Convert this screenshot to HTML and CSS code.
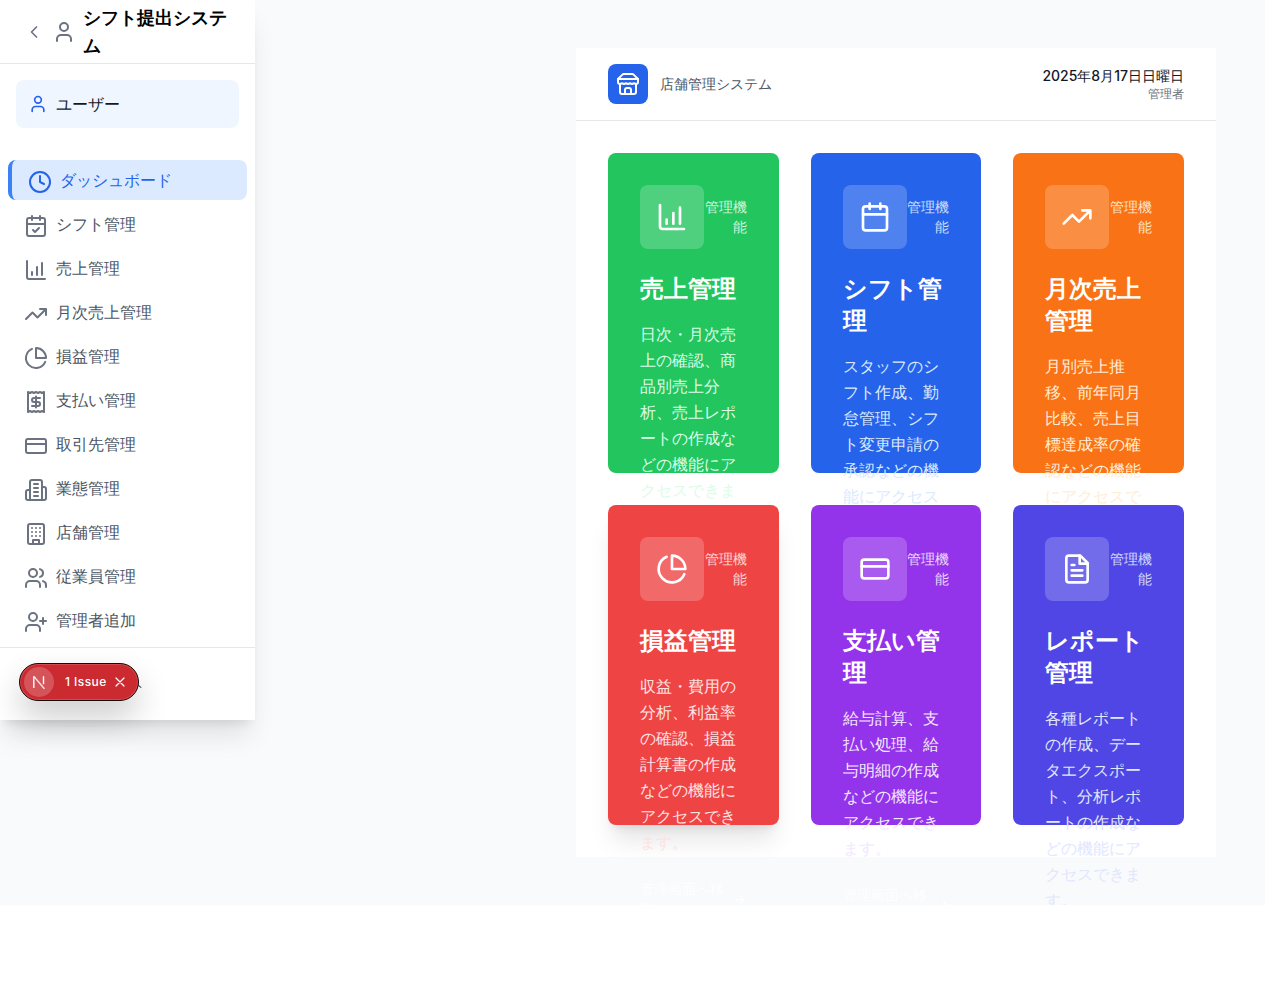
FILE: index.html
```html
<!DOCTYPE html>
<html lang="ja">
<head>
<meta charset="utf-8">
<title>シフト提出システム</title>
<link rel="stylesheet" href="styles.css">
</head>
<body>
<svg class="sprite" aria-hidden="true">
  <symbol id="i-chevron" viewBox="0 0 24 24"><path d="m15 18-6-6 6-6"/></symbol>
  <symbol id="i-user" viewBox="0 0 24 24"><path d="M19 21v-2a4 4 0 0 0-4-4H9a4 4 0 0 0-4 4v2"/><circle cx="12" cy="7" r="4"/></symbol>
  <symbol id="i-clock" viewBox="0 0 24 24"><circle cx="12" cy="12" r="10"/><path d="M12 6v6l4 2"/></symbol>
  <symbol id="i-calcheck" viewBox="0 0 24 24"><rect x="3" y="4" width="18" height="18" rx="2"/><path d="M16 2v4M8 2v4M3 10h18M9 16l2 2 4-4"/></symbol>
  <symbol id="i-calendar" viewBox="0 0 24 24"><rect x="3" y="4" width="18" height="18" rx="2"/><path d="M16 2v4M8 2v4M3 10h18"/></symbol>
  <symbol id="i-chart" viewBox="0 0 24 24"><path d="M3 3v16a2 2 0 0 0 2 2h16M18 17V5M13 17V9M8 17v-3"/></symbol>
  <symbol id="i-trend" viewBox="0 0 24 24"><path d="M22 7l-8.500 8.500-5-5L2 17M16 7h6v6"/></symbol>
  <symbol id="i-pie" viewBox="0 0 24 24"><path d="M21.210 15.890A10 10 0 1 1 8 2.830"/><path d="M22 12A10 10 0 0 0 12 2v10z"/></symbol>
  <symbol id="i-receipt" viewBox="0 0 24 24"><path d="M4 2v20l2-1 2 1 2-1 2 1 2-1 2 1 2-1 2 1V2l-2 1-2-1-2 1-2-1-2 1-2-1-2 1Z"/><path d="M16 8h-6a2 2 0 1 0 0 4h4a2 2 0 1 1 0 4H8M12 17.500v-11"/></symbol>
  <symbol id="i-card" viewBox="0 0 24 24"><rect x="2" y="5" width="20" height="14" rx="2"/><path d="M2 10h20"/></symbol>
  <symbol id="i-building2" viewBox="0 0 24 24"><path d="M6 22V4a2 2 0 0 1 2-2h8a2 2 0 0 1 2 2v18Z"/><path d="M6 12H4a2 2 0 0 0-2 2v6a2 2 0 0 0 2 2h2M18 9h2a2 2 0 0 1 2 2v9a2 2 0 0 1-2 2h-2M10 6h4M10 10h4M10 14h4M10 18h4"/></symbol>
  <symbol id="i-building" viewBox="0 0 24 24"><rect x="4" y="2" width="16" height="20" rx="2"/><path d="M9 22v-4h6v4M8 6h.01M16 6h.01M12 6h.01M12 10h.01M12 14h.01M16 10h.01M16 14h.01M8 10h.01M8 14h.01"/></symbol>
  <symbol id="i-users" viewBox="0 0 24 24"><path d="M16 21v-2a4 4 0 0 0-4-4H6a4 4 0 0 0-4 4v2"/><circle cx="9" cy="7" r="4"/><path d="M22 21v-2a4 4 0 0 0-3-3.870M16 3.130a4 4 0 0 1 0 7.750"/></symbol>
  <symbol id="i-userplus" viewBox="0 0 24 24"><path d="M16 21v-2a4 4 0 0 0-4-4H6a4 4 0 0 0-4 4v2"/><circle cx="9" cy="7" r="4"/><path d="M19 8v6M22 11h-6"/></symbol>
  <symbol id="i-file" viewBox="0 0 24 24"><path d="M14.500 2H6a2 2 0 0 0-2 2v16a2 2 0 0 0 2 2h12a2 2 0 0 0 2-2V7.500L14.500 2z"/><path d="M14 2v6h6M16 13H8M16 17H8M10 9H8"/></symbol>
  <symbol id="i-store" viewBox="0 0 24 24"><path d="m2 7 4.410-4.410A2 2 0 0 1 7.830 2h8.340a2 2 0 0 1 1.420.590L22 7"/><path d="M4 12v8a2 2 0 0 0 2 2h12a2 2 0 0 0 2-2v-8"/><path d="M15 22v-4a2 2 0 0 0-2-2h-2a2 2 0 0 0-2 2v4"/><path d="M2 7h20"/><path d="M22 7v3a2 2 0 0 1-2 2 2.700 2.700 0 0 1-1.590-.630.700.700 0 0 0-.820 0A2.700 2.700 0 0 1 16 12a2.700 2.700 0 0 1-1.590-.630.700.700 0 0 0-.820 0A2.700 2.700 0 0 1 12 12a2.700 2.700 0 0 1-1.590-.630.700.700 0 0 0-.820 0A2.700 2.700 0 0 1 8 12a2.700 2.700 0 0 1-1.590-.630.700.700 0 0 0-.820 0A2.700 2.700 0 0 1 4 12a2 2 0 0 1-2-2V7"/></symbol>
</svg>

<div class="page">
  <aside class="sidebar">
    <div class="side-head">
      <button class="back-btn" type="button"><svg class="icon icon-20 gray"><use href="#i-chevron"/></svg></button>
      <svg class="icon icon-24 gray"><use href="#i-user"/></svg>
      <h1 class="side-title">シフト提出システム</h1>
    </div>
    <div class="user-wrap">
      <div class="user-card">
        <svg class="icon icon-20 blue"><use href="#i-user"/></svg>
        <span class="user-name">ユーザー</span>
      </div>
    </div>
    <nav class="nav">
      <a class="nav-item active"><svg class="icon icon-24"><use href="#i-clock"/></svg><span>ダッシュボード</span></a>
      <a class="nav-item"><svg class="icon icon-24"><use href="#i-calcheck"/></svg><span>シフト管理</span></a>
      <a class="nav-item"><svg class="icon icon-24"><use href="#i-chart"/></svg><span>売上管理</span></a>
      <a class="nav-item"><svg class="icon icon-24"><use href="#i-trend"/></svg><span>月次売上管理</span></a>
      <a class="nav-item"><svg class="icon icon-24"><use href="#i-pie"/></svg><span>損益管理</span></a>
      <a class="nav-item"><svg class="icon icon-24"><use href="#i-receipt"/></svg><span>支払い管理</span></a>
      <a class="nav-item"><svg class="icon icon-24"><use href="#i-card"/></svg><span>取引先管理</span></a>
      <a class="nav-item"><svg class="icon icon-24"><use href="#i-building2"/></svg><span>業態管理</span></a>
      <a class="nav-item"><svg class="icon icon-24"><use href="#i-building"/></svg><span>店舗管理</span></a>
      <a class="nav-item"><svg class="icon icon-24"><use href="#i-users"/></svg><span>従業員管理</span></a>
      <a class="nav-item"><svg class="icon icon-24"><use href="#i-userplus"/></svg><span>管理者追加</span></a>
    </nav>
    <div class="side-foot"><span class="foot-mark"></span></div>
    <div class="issue-pill">
      <span class="issue-logo"><svg class="issue-n" viewBox="0 0 14 14"><path class="n-diag" d="M2 1.500L12.500 14"/><path class="n-stem" d="M1.800 13V1.200"/><path class="n-stem" d="M11.500 1.200v8"/></svg></span>
      <span class="issue-text">1 Issue</span>
      <svg class="issue-close" viewBox="0 0 10 10"><path d="M1 1l8 8M9 1l-8 8"/></svg>
    </div>
  </aside>

  <main class="main">
    <section class="panel">
      <header class="panel-head">
        <div class="brand">
          <span class="brand-logo"><svg class="icon icon-24"><use href="#i-store"/></svg></span>
          <span class="brand-name">店舗管理システム</span>
        </div>
        <div class="meta">
          <div class="meta-date">2025年8月17日日曜日</div>
          <div class="meta-role">管理者</div>
        </div>
      </header>
      <div class="cards">
        <article class="card green">
          <div class="card-top"><span class="card-icon"><svg class="icon icon-32"><use href="#i-chart"/></svg></span><span class="card-tag">管理機能</span></div>
          <h2 class="card-title">売上管理</h2>
          <p class="card-desc">日次・月次売上の確認、商品別売上分析、売上レポートの作成などの機能にアクセスできます。</p>
          <div class="card-link"><span>管理画面へ移動</span><span class="arrow">→</span></div>
        </article>
        <article class="card blue-card">
          <div class="card-top"><span class="card-icon"><svg class="icon icon-32"><use href="#i-calendar"/></svg></span><span class="card-tag">管理機能</span></div>
          <h2 class="card-title">シフト管理</h2>
          <p class="card-desc">スタッフのシフト作成、勤怠管理、シフト変更申請の承認などの機能にアクセスできます。</p>
          <div class="card-link"><span>管理画面へ移動</span><span class="arrow">→</span></div>
        </article>
        <article class="card orange">
          <div class="card-top"><span class="card-icon"><svg class="icon icon-32"><use href="#i-trend"/></svg></span><span class="card-tag">管理機能</span></div>
          <h2 class="card-title">月次売上管理</h2>
          <p class="card-desc">月別売上推移、前年同月比較、売上目標達成率の確認などの機能にアクセスできます。</p>
          <div class="card-link"><span>管理画面へ移動</span><span class="arrow">→</span></div>
        </article>
        <article class="card red">
          <div class="card-top"><span class="card-icon"><svg class="icon icon-32"><use href="#i-pie"/></svg></span><span class="card-tag">管理機能</span></div>
          <h2 class="card-title">損益管理</h2>
          <p class="card-desc">収益・費用の分析、利益率の確認、損益計算書の作成などの機能にアクセスできます。</p>
          <div class="card-link"><span>管理画面へ移動</span><span class="arrow">→</span></div>
        </article>
        <article class="card purple">
          <div class="card-top"><span class="card-icon"><svg class="icon icon-32"><use href="#i-card"/></svg></span><span class="card-tag">管理機能</span></div>
          <h2 class="card-title">支払い管理</h2>
          <p class="card-desc">給与計算、支払い処理、給与明細の作成などの機能にアクセスできます。</p>
          <div class="card-link"><span>管理画面へ移動</span><span class="arrow">→</span></div>
        </article>
        <article class="card indigo">
          <div class="card-top"><span class="card-icon"><svg class="icon icon-32"><use href="#i-file"/></svg></span><span class="card-tag">管理機能</span></div>
          <h2 class="card-title">レポート管理</h2>
          <p class="card-desc">各種レポートの作成、データエクスポート、分析レポートの作成などの機能にアクセスできます。</p>
          <div class="card-link"><span>管理画面へ移動</span><span class="arrow">→</span></div>
        </article>
      </div>
    </section>
  </main>
</div>
</body>
</html>
```

FILE: styles.css
```css
* { box-sizing: border-box; }

html, body { margin: 0; padding: 0; background: #fff; }

body {
  font-family: Inter, sans-serif;
  font-size: 16px;
  line-height: 24px;
  color: #111827;
}

.sprite { position: absolute; width: 0; height: 0; }

.icon {
  display: block;
  flex: none;
  fill: none;
  stroke: currentColor;
  stroke-width: 2;
  stroke-linecap: round;
  stroke-linejoin: round;
}
.icon-20 { width: 20px; height: 20px; }
.icon-24 { width: 24px; height: 24px; }
.icon-32 { width: 32px; height: 32px; }
.gray { color: #6b7280; }
.blue { color: #2563eb; }

.page {
  position: relative;
  display: flex;
  height: 905px;
  overflow: hidden;
  background: #f9fafb;
}

/* Sidebar */
.sidebar {
  position: relative;
  flex: none;
  display: flex;
  flex-direction: column;
  width: 255px;
  height: 720px;
  background: #fff;
  box-shadow: 0 20px 25px -5px rgba(0, 0, 0, .1), 0 8px 10px -6px rgba(0, 0, 0, .1);
  z-index: 2;
}

.side-head {
  display: flex;
  align-items: center;
  height: 64px;
  padding: 0 16px;
  border-bottom: 1px solid #e5e7eb;
}

.back-btn {
  display: flex;
  padding: 8px;
  border: 0;
  background: none;
}

.side-title {
  margin: 0 0 0 7px;
  font-size: 18px;
  line-height: 28px;
  font-weight: 700;
  color: #000;
}

.user-wrap { padding: 16px 16px 32px; }

.user-card {
  display: flex;
  align-items: center;
  gap: 8px;
  height: 48px;
  padding: 0 12px;
  border-radius: 8px;
  background: #eff6ff;
}

.user-name { font-weight: 500; color: #111827; }

.nav {
  display: flex;
  flex-direction: column;
  gap: 4px;
  padding: 0 8px;
}

.nav-item {
  display: flex;
  align-items: center;
  gap: 8px;
  height: 40px;
  padding: 0 16px;
  border-radius: 8px;
  color: #4b5563;
}

.nav-item .icon {
  margin-top: 4px;
  color: #6b7280;
}

.nav-item.active {
  padding-left: 16px;
  border-left: 4px solid #3b82f6;
  background: #dbeafe;
  color: #2563eb;
}

.nav-item.active .icon { color: #2563eb; }

.side-foot {
  position: relative;
  flex: 1;
  margin-top: 7px;
  border-top: 1px solid #e5e7eb;
}

.foot-mark {
  position: absolute;
  left: 138px;
  top: 37px;
  width: 4px;
  height: 2px;
  border-bottom: 1px solid #374151;
  transform: rotate(40deg);
}

.issue-pill {
  position: absolute;
  left: 19px;
  top: 663px;
  display: flex;
  align-items: center;
  width: 120px;
  height: 38px;
  padding: 0 13px 0 4px;
  border-radius: 19px;
  background: #ca2a30;
  border: 1px solid #1a0a0a;
  box-shadow: inset 0 0 0 1px rgba(255, 255, 255, .15), 0 16px 32px rgba(0, 0, 0, .2);
  color: #fff;
}

.issue-logo {
  display: flex;
  align-items: center;
  justify-content: center;
  width: 30px;
  height: 30px;
  border-radius: 50%;
  background: rgba(255, 255, 255, .2);
}

.issue-n { width: 14px; height: 14px; fill: none; stroke-width: 1.400; }
.n-stem { stroke: #fff; }
.n-diag { stroke: rgba(255, 255, 255, .8); }

.issue-text {
  margin-left: 11px;
  font-size: 12px;
  line-height: 16px;
  font-weight: 500;
  letter-spacing: .45px;
}

.issue-close {
  width: 10px;
  height: 10px;
  margin-left: auto;
  fill: none;
  stroke: #fff;
  stroke-width: 1.200;
  stroke-linecap: round;
}

/* Main */
.main {
  flex: 1;
  display: flex;
  justify-content: flex-end;
  padding: 48px 49px 48px 0;
}

.panel {
  width: 640px;
  height: 809px;
  background: #fff;
}

.panel-head {
  display: flex;
  align-items: center;
  justify-content: space-between;
  padding: 16px 32px;
  border-bottom: 1px solid #e5e7eb;
}

.brand { display: flex; align-items: center; gap: 12px; }

.brand-logo {
  display: flex;
  align-items: center;
  justify-content: center;
  width: 40px;
  height: 40px;
  border-radius: 8px;
  background: #2563eb;
  color: #fff;
}

.brand-name { font-size: 14px; line-height: 20px; color: #4b5563; }

.meta { text-align: right; }
.meta-date { font-size: 14px; line-height: 20px; font-weight: 500; color: #111827; }
.meta-role { font-size: 12px; line-height: 16px; color: #6b7280; }

.cards {
  display: grid;
  grid-template-columns: repeat(3, minmax(0, 1fr));
  grid-auto-rows: 320px;
  gap: 32px;
  padding: 32px;
}

.card {
  min-width: 0;
  min-height: 0;
  padding: 32px;
  border-radius: 8px;
  color: #fff;
}

.green { background: #22c55e; --tint: #dcfce7; }
.blue-card { background: #2563eb; --tint: #dbeafe; }
.orange { background: #f97316; --tint: #ffedd5; }
.red {
  background: #ef4444;
  --tint: #fee2e2;
  box-shadow: 0 20px 25px -5px rgba(0, 0, 0, .1), 0 8px 10px -6px rgba(0, 0, 0, .1);
}
.purple { background: #9333ea; --tint: #f3e8ff; }
.indigo { background: #4f46e5; --tint: #e0e7ff; }

.card-top {
  display: flex;
  align-items: center;
  justify-content: space-between;
  margin-bottom: 24px;
}

.card-icon {
  display: flex;
  flex: none;
  align-items: center;
  justify-content: center;
  width: 64px;
  height: 64px;
  border-radius: 8px;
  background: rgba(255, 255, 255, .2);
}

.card-tag {
  font-size: 14px;
  line-height: 20px;
  text-align: right;
  color: var(--tint);
  opacity: .9;
}

.card-title {
  margin: 0 0 16px;
  font-size: 24px;
  line-height: 32px;
  font-weight: 700;
  color: #fff;
}

.card-desc {
  margin: 0 0 24px;
  font-size: 16px;
  line-height: 26px;
  color: var(--tint);
}

.card-link {
  display: flex;
  align-items: center;
  justify-content: space-between;
  font-size: 14px;
  line-height: 20px;
  font-weight: 500;
  color: #fff;
}

.arrow { flex: none; }
```
